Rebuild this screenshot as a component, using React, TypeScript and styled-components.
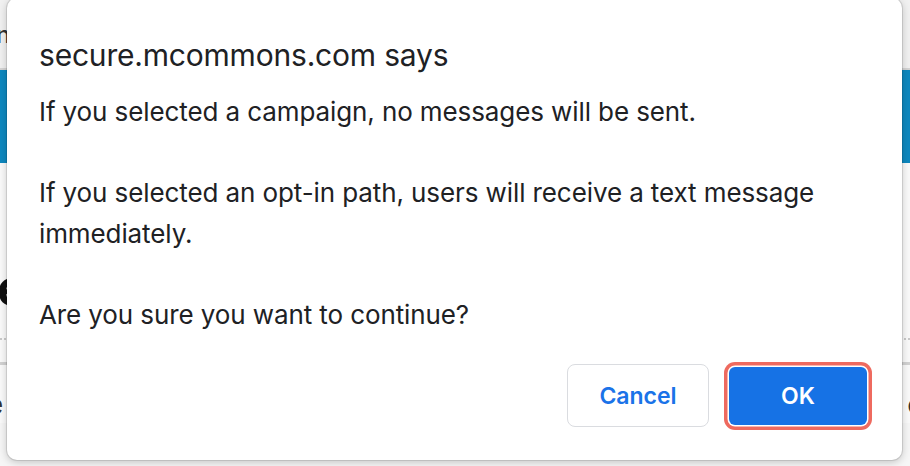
import styled, { createGlobalStyle } from 'styled-components';

const GlobalStyle = createGlobalStyle`
  html, body {
    margin: 0;
    padding: 0;
  }
  body {
    width: 910px;
    height: 466px;
    overflow: hidden;
    font-family: Inter, "Noto Sans", sans-serif;
  }
`;

const Page = styled.div`
  position: relative;
  width: 910px;
  height: 466px;
  overflow: hidden;
  background: #f6f6f6;
  color: #222;
`;

const Header = styled.header`
  height: 68px;
  display: flex;
  align-items: center;
  background: #f1f1f1;
  border-bottom: 2px solid #d4d4d4;
`;

const HeaderText = styled.span`
  margin-left: -40px;
  font-size: 24px;
  font-weight: 500;
  color: #333;
`;

const Banner = styled.div`
  height: 93px;
  background: #0e88bf;
`;

const Content = styled.main`
  padding-top: 95px;
  background: #fafafa;
`;

const Heading = styled.h1`
  margin: 0 0 0 -34px;
  font-size: 52px;
  line-height: 60px;
  font-weight: 700;
  color: #111;
`;

const Dotted = styled.hr`
  margin: 20px 0 0;
  border: 0;
  border-top: 2px dotted #c9c9c9;
`;

const Rule = styled.hr`
  margin: 22px 0 0;
  border: 0;
  border-top: 3px solid #d2d2d2;
`;

const TextRow = styled.div`
  display: flex;
  justify-content: space-between;
  margin-top: 22px;
  font-size: 26px;
  line-height: 36px;
  color: #333;
`;

const EdgeText = styled.span<{ $side: 'left' | 'right' }>`
  margin-left: ${({ $side }) => ($side === 'left' ? '-12px' : '0')};
  margin-right: ${({ $side }) => ($side === 'right' ? '-12px' : '0')};
`;

const Dialog = styled.div`
  position: absolute;
  left: 7px;
  top: -2px;
  width: 895px;
  height: 462px;
  box-sizing: border-box;
  padding: 39px 35px 33px 32px;
  display: flex;
  flex-direction: column;
  background: #fff;
  border-radius: 10px;
  box-shadow: 0 0 0 1px rgba(0, 0, 0, 0.1), 0 2px 8px rgba(0, 0, 0, 0.22);
  color: #202124;
`;

const Title = styled.h2`
  margin: 0;
  font-size: 30px;
  line-height: 36px;
  font-weight: 400;
  letter-spacing: -0.2px;
`;

const Message = styled.div`
  margin-top: 19px;
  font-size: 26px;
  line-height: 40.5px;
  letter-spacing: -0.1px;
`;

const Paragraph = styled.p`
  margin: 0 0 40.5px;

  &:last-child {
    margin-bottom: 0;
  }
`;

const Actions = styled.div`
  margin-top: auto;
  display: flex;
  justify-content: flex-end;
  align-items: center;
  gap: 20px;
`;

const Button = styled.button<{ $primary?: boolean }>`
  font-family: inherit;
  font-size: 23px;
  font-weight: 600;
  cursor: pointer;
  outline: none;
  border-radius: ${({ $primary }) => ($primary ? '6px' : '8px')};
  width: ${({ $primary }) => ($primary ? '138px' : '142px')};
  height: ${({ $primary }) => ($primary ? '58px' : '63px')};
  color: ${({ $primary }) => ($primary ? '#fff' : '#1a73e8')};
  background: ${({ $primary }) => ($primary ? '#1672e5' : '#fff')};
  border: ${({ $primary }) => ($primary ? '0' : '1px solid #dadce0')};
  box-shadow: ${({ $primary }) =>
    $primary ? '0 0 0 1.5px #fff, 0 0 0 5px #ee6a5f' : 'none'};
  margin-top: ${({ $primary }) => ($primary ? '1px' : '0')};

  &:focus,
  &:focus-visible {
    outline: none;
  }
`;

export default function App() {
  return (
    <Page>
      <GlobalStyle />
      <Header>
        <HeaderText>Menu</HeaderText>
      </Header>
      <Banner />
      <Content>
        <Heading>Te</Heading>
        <Dotted />
        <Rule />
        <TextRow>
          <EdgeText $side="left">e</EdgeText>
          <EdgeText $side="right">c</EdgeText>
        </TextRow>
      </Content>
      <Dialog role="alertdialog">
        <Title>secure.mcommons.com says</Title>
        <Message>
          <Paragraph>If you selected a campaign, no messages will be sent.</Paragraph>
          <Paragraph>
            If you selected an opt-in path, users will receive a text message immediately.
          </Paragraph>
          <Paragraph>Are you sure you want to continue?</Paragraph>
        </Message>
        <Actions>
          <Button>Cancel</Button>
          <Button $primary autoFocus>
            OK
          </Button>
        </Actions>
      </Dialog>
    </Page>
  );
}
